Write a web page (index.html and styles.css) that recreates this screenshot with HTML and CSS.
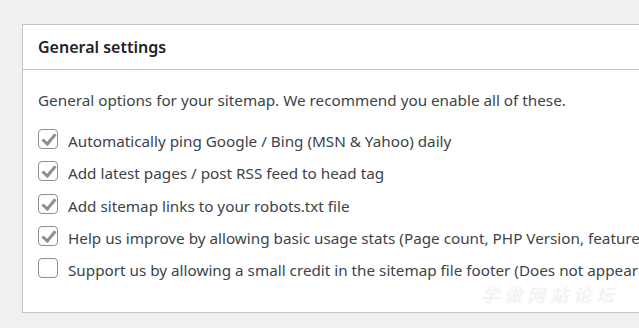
FILE: index.html
```html
<!DOCTYPE html>
<html>
<head>
<meta charset="utf-8">
<link rel="stylesheet" href="styles.css">
</head>
<body>
<div class="page">
  <section class="postbox">
    <header class="postbox-header"><h2>General settings</h2></header>
    <div class="inside">
      <p class="desc">General options for your sitemap. We recommend you enable all of these.</p>
      <ul class="options">
        <li><span class="cb checked"></span><span class="label">Automatically ping Google / Bing (MSN &amp; Yahoo) daily</span></li>
        <li><span class="cb checked"></span><span class="label">Add latest pages / post RSS feed to head tag</span></li>
        <li><span class="cb checked"></span><span class="label">Add sitemap links to your robots.txt file</span></li>
        <li><span class="cb checked"></span><span class="label">Help us improve by allowing basic usage stats (Page count, PHP Version, feature</span></li>
        <li><span class="cb"></span><span class="label">Support us by allowing a small credit in the sitemap file footer (Does not appear</span></li>
      </ul>
      <div class="watermark">学做网站论坛</div>
    </div>
  </section>
</div>
</body>
</html>
```

FILE: styles.css
```css
html, body {
  margin: 0;
  padding: 0;
  background: #f0f0f1;
  overflow: hidden;
}
body {
  width: 639px;
  height: 328px;
  font-family: "Noto Sans", "Open Sans", sans-serif;
  color: #3c434a;
}
.page {
  padding: 24px 0 0 22px;
}
.postbox {
  background: #fff;
  border: 1px solid #c3c4c7;
  border-right: none;
  width: 617px;
  box-sizing: border-box;
  overflow: hidden;
}
.postbox-header {
  height: 44px;
  border-bottom: 1px solid #c3c4c7;
  display: flex;
  align-items: center;
  padding-left: 15px;
}
.postbox-header h2 {
  margin: 0;
  font-size: 16px;
  font-weight: 600;
  color: #1d2327;
  white-space: nowrap;
}
.inside {
  position: relative;
  padding: 20px 0 0 15px;
  height: 242px;
  box-sizing: border-box;
}
.desc {
  margin: 0 0 19px;
  font-size: 15.25px;
  line-height: 20px;
  white-space: nowrap;
}
.options {
  list-style: none;
  margin: 0;
  padding: 0;
  display: flex;
  flex-direction: column;
  gap: 12.25px;
}
.options li {
  display: flex;
  align-items: center;
  gap: 10px;
  height: 20px;
  white-space: nowrap;
}
.label {
  font-size: 15.25px;
  line-height: 20px;
  padding-top: 4px;
}
.cb {
  flex: none;
  width: 18px;
  height: 18px;
  border: 1px solid #8c8f94;
  border-radius: 4px;
  background: #fff;
  position: relative;
}
.cb.checked::after {
  content: "";
  position: absolute;
  left: 6px;
  top: 1px;
  width: 5px;
  height: 11px;
  border: solid #8c8f94;
  border-width: 0 3px 3px 0;
  transform: rotate(40deg);
}
.watermark {
  position: absolute;
  left: 458px;
  top: 212px;
  font-size: 18px;
  line-height: 24px;
  font-weight: 700;
  font-style: italic;
  letter-spacing: 5px;
  color: #f3f3f3;
  font-family: "Noto Sans CJK SC", sans-serif;
  white-space: nowrap;
}
```
